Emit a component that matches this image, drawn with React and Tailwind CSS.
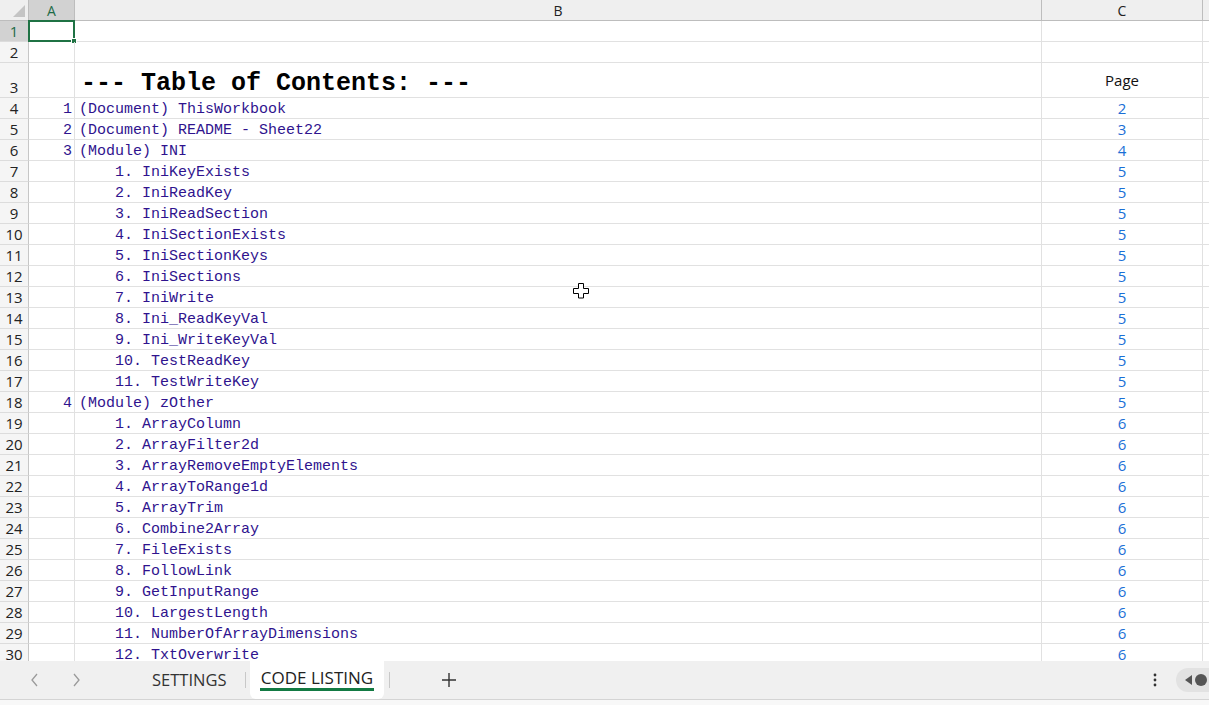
import React from "react";

const MONO = { fontFamily: '"Liberation Mono", "DejaVu Sans Mono", monospace' };
const SANS = { fontFamily: '"Open Sans", "Noto Sans", sans-serif' };

const rows = [
  { a: "", b: "", c: "" },
  { a: "", b: "", c: "" },
  { title: true },
  { a: "1", b: "(Document) ThisWorkbook", c: "2" },
  { a: "2", b: "(Document) README - Sheet22", c: "3" },
  { a: "3", b: "(Module) INI", c: "4" },
  ...[
    "IniKeyExists",
    "IniReadKey",
    "IniReadSection",
    "IniSectionExists",
    "IniSectionKeys",
    "IniSections",
    "IniWrite",
    "Ini_ReadKeyVal",
    "Ini_WriteKeyVal",
    "TestReadKey",
    "TestWriteKey",
  ].map((n, i) => ({ a: "", b: `    ${i + 1}. ${n}`, c: "5" })),
  { a: "4", b: "(Module) zOther", c: "5" },
  ...[
    "ArrayColumn",
    "ArrayFilter2d",
    "ArrayRemoveEmptyElements",
    "ArrayToRange1d",
    "ArrayTrim",
    "Combine2Array",
    "FileExists",
    "FollowLink",
    "GetInputRange",
    "LargestLength",
    "NumberOfArrayDimensions",
    "TxtOverwrite",
  ].map((n, i) => ({ a: "", b: `    ${i + 1}. ${n}`, c: "6" })),
];

function Row({ r, idx }) {
  const num = idx + 1;
  const tall = r.title;
  const h = tall ? "h-[35px]" : "h-[21px]";
  const selected = num === 1;
  return (
    <div className={`flex ${h} shrink-0`}>
      <div
        className={`w-[29px] shrink-0 border-r border-b border-r-[#c6c6c6] border-b-[#dcdcdc] flex items-end justify-center pb-[1px] text-[15px] leading-[18px] ${
          selected ? "bg-[#d2d2d2] text-[#1e6b47]" : "bg-[#f5f5f5] text-[#222]"
        }`}
        style={SANS}
      >
        {num}
      </div>
      <div
        className="w-[46px] shrink-0 border-r border-b border-[#e1e1e1] flex items-center justify-end pr-[2px] pt-[3px] text-[15px] leading-[18px] text-[#2f138e] relative"
        style={MONO}
      >
        {r.a}
        {selected && (
          <div className="absolute left-[-1px] top-[-1px] w-[47px] h-[22px] border-2 border-[#1f7244]">
            <div className="absolute right-[-4px] bottom-[-4px] w-[6px] h-[6px] bg-[#1f7244] border border-white" />
          </div>
        )}
      </div>
      <div
        className={`w-[967px] shrink-0 border-r border-b border-[#e1e1e1] flex pl-[4px] text-[15px] leading-[18px] text-[#2f138e] whitespace-pre ${
          tall ? "items-end pb-0" : "items-center pt-[3px]"
        }`}
        style={MONO}
      >
        {tall ? (
          <span className="text-[25px] font-bold text-black leading-[30px] pl-[2px] translate-y-[2px]" style={MONO}>
            --- Table of Contents: ---
          </span>
        ) : (
          r.b
        )}
      </div>
      <div
        className={`w-[161px] shrink-0 border-r border-b border-[#e1e1e1] flex justify-center text-[15px] leading-[18px] ${
          tall ? "text-[#111] items-end pb-[8px]" : "text-[#1a6fd6] items-center"
        }`}
        style={SANS}
      >
        {tall ? "Page" : r.c}
      </div>
      <div className="flex-1 border-b border-[#e1e1e1]" />
    </div>
  );
}

export default function App() {
  return (
    <div className="w-[1209px] h-[705px] flex flex-col bg-white overflow-hidden relative" style={SANS}>
      <div className="h-[661px] flex flex-col overflow-hidden shrink-0">
        {/* Column header */}
        <div className="flex h-[21px] shrink-0 bg-[#efefef] border-b border-[#bdbdbd]">
          <div className="w-[29px] shrink-0 border-r border-[#bdbdbd] relative">
            <svg className="absolute right-[3px] bottom-[3px]" width="12" height="12" viewBox="0 0 12 12">
              <polygon points="12,0 12,12 0,12" fill="#c4c4c4" />
            </svg>
          </div>
          <div className="w-[46px] shrink-0 border-r border-[#bdbdbd] bg-[#d2d2d2] flex items-center justify-center text-[14px] text-[#1e6b47] leading-none pt-[1px]">
            A
          </div>
          <div className="w-[967px] shrink-0 border-r border-[#bdbdbd] flex items-center justify-center text-[14px] text-[#222] leading-none pt-[1px]">
            B
          </div>
          <div className="w-[161px] shrink-0 border-r border-[#bdbdbd] flex items-center justify-center text-[14px] text-[#222] leading-none pt-[1px]">
            C
          </div>
          <div className="flex-1" />
        </div>
        {rows.map((r, i) => (
          <Row key={i} r={r} idx={i} />
        ))}
      </div>

      {/* Tab bar */}
      <div className="h-[39px] shrink-0 bg-[#f0f0f0] border-b border-[#d4d4d4] flex items-stretch relative">
        <div className="w-[150px] shrink-0 flex items-center">
          <svg className="ml-[29px]" width="12" height="16" viewBox="0 0 12 16">
            <polyline points="8,2 3,8 8,14" fill="none" stroke="#9a9a9a" strokeWidth="1.3" />
          </svg>
          <svg className="ml-[29px]" width="12" height="16" viewBox="0 0 12 16">
            <polyline points="4,2 9,8 4,14" fill="none" stroke="#9a9a9a" strokeWidth="1.3" />
          </svg>
        </div>
        <div className="w-[95px] flex items-center text-[16.5px] text-[#333] pl-[2px]">SETTINGS</div>
        <div className="w-px bg-[#c8c8c8] my-[11px]" />
        <div className="ml-[4px] w-[134px] bg-white rounded-b-[6px] flex flex-col items-center justify-center relative">
          <span className="text-[17px] text-[#222] font-medium leading-[22px] mt-[-4px]">CODE LISTING</span>
          <div className="absolute left-[10px] right-[10px] bottom-[8px] h-[3px] bg-[#137a43]" />
        </div>
        <div className="w-px bg-[#c8c8c8] my-[11px] ml-[5px]" />
        <div className="w-[118px] flex items-center justify-center">
          <svg width="16" height="16" viewBox="0 0 16 16">
            <path d="M8 1v14M1 8h14" stroke="#333" strokeWidth="1.4" />
          </svg>
        </div>
        <div className="flex-1" />
        <div className="w-[18px] flex items-center justify-center mr-[12px]">
          <svg width="4" height="14" viewBox="0 0 4 14">
            <circle cx="2" cy="2" r="1.4" fill="#333" />
            <circle cx="2" cy="7" r="1.4" fill="#333" />
            <circle cx="2" cy="12" r="1.4" fill="#333" />
          </svg>
        </div>
        <div className="w-[33px] flex items-center">
          <div className="h-[24px] w-[40px] rounded-l-full bg-[#e2e2e2] flex items-center pl-[8px] gap-[3px]">
            <svg width="8" height="10" viewBox="0 0 8 10">
              <polygon points="8,0 8,10 1,5" fill="#555" />
            </svg>
            <div className="w-[12px] h-[12px] rounded-full bg-[#555]" />
          </div>
        </div>
      </div>
      <div className="flex-1 bg-[#f8f8f8]" />

      {/* Mouse cursor */}
      <svg className="absolute left-[573px] top-[283px]" width="17" height="16" viewBox="0 0 17 16">
        <polygon
          points="5.5,0.5 10.5,0.5 10.5,5.5 15.5,5.5 15.5,10.5 10.5,10.5 10.5,15 5.5,15 5.5,10.5 0.5,10.5 0.5,5.5 5.5,5.5"
          fill="white"
          stroke="black"
          strokeWidth="1"
        />
      </svg>
    </div>
  );
}
